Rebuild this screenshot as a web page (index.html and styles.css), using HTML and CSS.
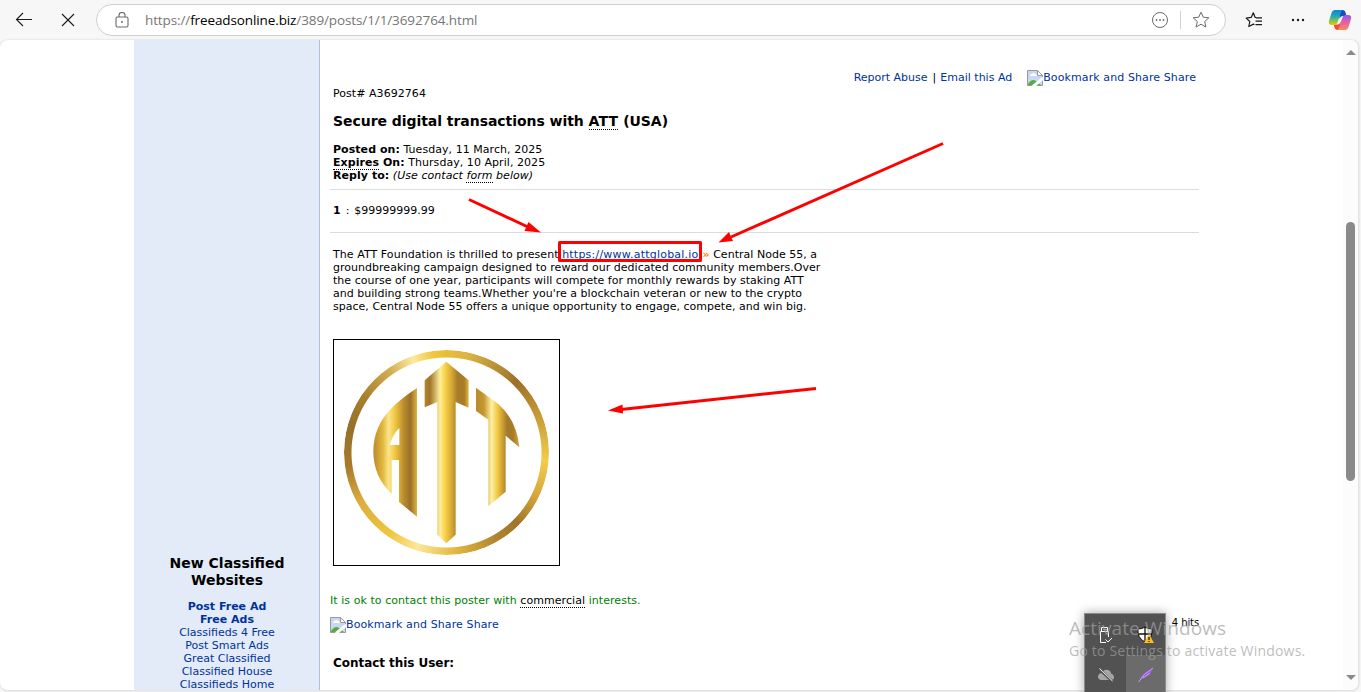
FILE: index.html
```
<!DOCTYPE html>
<html lang="en">
<head>
    <meta charset="UTF-8">
    <meta name="viewport" content="width=device-width, initial-scale=1.0">
    <title>Secure digital transactions with ATT (USA)</title>
    <link rel="stylesheet" href="styles.css">
</head>
<body>
    <!-- shared icons -->
    <svg class="defs" width="0" height="0">
        <symbol id="broken-image" viewBox="0 0 16 16">
            <path d="M.5 .5h10l5 5v10H.5z" fill="#c9d8f2"/>
            <path d="M3 6q0-2 2-2 1-2 3 0 2 0 2 2z" fill="#fff"/>
            <path d="M1 15v-1q4-6 8-3l5 4z" fill="#56ad39"/>
            <path d="M10.500 .5v5h5z" fill="#fff"/>
            <path d="M.5 .5h10l5 5v10H.5zM10.500 .5v5h5" fill="none" stroke="#9a9a9a"/>
            <path d="M6 16.500L16.500 8" stroke="#fff" stroke-width="3"/>
        </symbol>
        <symbol id="star" viewBox="0 0 18 18">
            <path d="M9 1.200l2.300 5 5.500.600-4.100 3.700 1.200 5.500L9 13.200 4.100 16l1.200-5.500L1.200 6.800l5.500-.600z" fill="none" stroke="#6b6b6b" stroke-linejoin="round"/>
        </symbol>
    </svg>

    <div class="toolbar">
        <svg class="back" width="18" height="16" viewBox="0 0 18 16"><path d="M17 7.500H1.500M8 1L1.500 7.500 8 14" fill="none" stroke="#1b1b1b" stroke-width="1.100"/></svg>
        <svg class="stop" width="14" height="14" viewBox="0 0 14 14"><path d="M1 1l12 12M13 1L1 13" stroke="#1b1b1b" stroke-width="1.100"/></svg>
        <div class="address">
            <svg class="lock" width="14" height="16" viewBox="0 0 14 16">
                <rect x="1" y="5" width="12" height="10" rx="1.500" fill="none" stroke="#6b6b6b" stroke-width="1.100"/>
                <path d="M4 5V3.500a3 3 0 0 1 6 0V5" fill="none" stroke="#6b6b6b" stroke-width="1.100"/>
                <circle cx="7" cy="10" r="1" fill="#6b6b6b"/>
            </svg>
            <span class="url">https://<b>freeadsonline.biz</b>/389/posts/1/1/3692764.html</span>
            <svg class="more" width="18" height="18" viewBox="0 0 18 18">
                <circle cx="9" cy="9" r="7.500" fill="none" stroke="#6b6b6b"/>
                <circle cx="5.500" cy="9" r=".9" fill="#6b6b6b"/><circle cx="9" cy="9" r=".9" fill="#6b6b6b"/><circle cx="12.500" cy="9" r=".9" fill="#6b6b6b"/>
            </svg>
            <span class="divider"></span>
            <svg width="18" height="18"><use href="#star"/></svg>
        </div>
        <svg class="favorites" width="18" height="18" viewBox="0 0 18 18">
            <path d="M11 6.500h-.8L8.300 1.800 6.200 6.400l-5 .700 3.600 3.400-1 5 4.600-2.400 1 .6M11 6.800h6M10.500 10.200h6.500M10.500 13.600h6.500" fill="none" stroke="#1b1b1b" stroke-width="1.200" stroke-linejoin="round"/>
        </svg>
        <svg class="dots" width="14" height="4" viewBox="0 0 14 4" fill="#1b1b1b"><circle cx="2" cy="2" r="1.200"/><circle cx="7" cy="2" r="1.200"/><circle cx="12" cy="2" r="1.200"/></svg>
        <svg class="copilot" width="24" height="22" viewBox="0 0 24 22">
            <defs>
                <linearGradient id="cpA" x1="0" y1="0" x2="0" y2="1"><stop offset="0" stop-color="#0c87e0"/><stop offset=".4" stop-color="#1ea7b8"/><stop offset=".7" stop-color="#7cc451"/><stop offset="1" stop-color="#f5c400"/></linearGradient>
                <linearGradient id="cpB" x1="0" y1="0" x2="0" y2="1"><stop offset="0" stop-color="#8c5ce8"/><stop offset=".5" stop-color="#e75fa8"/><stop offset="1" stop-color="#ff8a4c"/></linearGradient>
            </defs>
            <path d="M11 1h4q2 0 2.700 3l.8 3h-4q-2 0-3 3z" fill="#1650b8"/>
            <path d="M13 21H9q-2 0-2.700-3l-.6-2.500h4q2 0 3-3z" fill="#ee5037"/>
            <path d="M7 1h8q-1.500.5-2.300 3L9.700 13q-.7 3-2.700 3H4q-4 0-3-4L3.500 4q1-3 3.500-3z" fill="url(#cpA)"/>
            <path d="M17 21H9q1.500-.5 2.300-3l3-9q.7-3 2.700-3h3q4 0 3 4l-2.500 8q-1 3-3.500 3z" fill="url(#cpB)"/>
        </svg>
    </div>

    <div class="page">
        <div class="sidebar">
            <h3>New Classified Websites</h3>
            <a class="bold">Post Free Ad</a>
            <a class="bold">Free Ads</a>
            <a>Classifieds 4 Free</a>
            <a>Post Smart Ads</a>
            <a>Great Classified</a>
            <a>Classified House</a>
            <a>Classifieds Home</a>
        </div>

        <div class="main">
            <div class="links">
                <a>Report Abuse</a><span class="pipe">|</span><a>Email this Ad</a>
                <a class="share"><svg width="16" height="16"><use href="#broken-image"/></svg>Bookmark and Share Share</a>
            </div>
            <div class="post-id">Post# A3692764</div>
            <h1>Secure digital transactions with <u>ATT</u> (USA)</h1>
            <div class="meta">
                <div><b>Posted on:</b> Tuesday, 11 March, 2025</div>
                <div><b><u>Expires</u> On:</b> Thursday, 10 April, 2025</div>
                <div><b>Reply to:</b> <i>(Use contact <u>form</u> below)</i></div>
            </div>
            <div class="price"><b>1</b> : $99999999.99</div>
            <p class="description"><span class="intro">The ATT Foundation is thrilled to present</span> <a class="site">https://www.attglobal.io</a><span class="raquo">»</span> Central Node 55, a<br>
                groundbreaking campaign designed to reward our dedicated community members.Over<br>
                the course of one year, participants will compete for monthly rewards by staking ATT<br>
                and building strong teams.Whether you're a blockchain veteran or new to the crypto<br>
                space, Central Node 55 offers a unique opportunity to engage, compete, and win big.</p>

            <div class="photo">
                <svg width="225" height="225" viewBox="27 30 675 675">
                    <defs>
                        <linearGradient id="goldA" gradientUnits="userSpaceOnUse" x1="145" y1="0" x2="276" y2="0">
                            <stop offset="0" stop-color="#b98b2b"/><stop offset=".22" stop-color="#e3b93f"/><stop offset=".35" stop-color="#fbe58a"/><stop offset=".5" stop-color="#f0c63e"/><stop offset=".7" stop-color="#b98b2f"/><stop offset=".85" stop-color="#99702a"/><stop offset="1" stop-color="#e0b33b"/>
                        </linearGradient>
                        <linearGradient id="goldB" gradientUnits="userSpaceOnUse" x1="299" y1="0" x2="431" y2="0">
                            <stop offset="0" stop-color="#b3852b"/><stop offset=".12" stop-color="#a0752a"/><stop offset=".35" stop-color="#ffef9c"/><stop offset=".45" stop-color="#fbd54d"/><stop offset=".6" stop-color="#d9ad38"/><stop offset=".75" stop-color="#a87b28"/><stop offset=".9" stop-color="#a97c2a"/><stop offset="1" stop-color="#e3b840"/>
                        </linearGradient>
                        <linearGradient id="goldC" gradientUnits="userSpaceOnUse" x1="453" y1="0" x2="583" y2="0">
                            <stop offset="0" stop-color="#b98a2c"/><stop offset=".18" stop-color="#c4972f"/><stop offset=".36" stop-color="#fff0a2"/><stop offset=".5" stop-color="#f1c740"/><stop offset=".72" stop-color="#a57929"/><stop offset=".85" stop-color="#a77b2a"/><stop offset="1" stop-color="#d5a638"/>
                        </linearGradient>
                    </defs>
                    <path fill="url(#goldA)" fill-rule="evenodd" d="M276 174V560L222 516V390H200V492Q145 440 145 364Q145 290 200 234Q230 204 276 174ZM223 294Q205 310 194 345H223Z"/>
                    <path fill="url(#goldB)" d="M364 95L431 151V233L392 216V614L364 640L337 614V216L299 232V151Z"/>
                    <path fill="url(#goldC)" d="M453 173L520 222Q575 270 583 352L542 317V485L490 529V269L453 243Z"/>
                </svg>
            </div>

            <div class="contact-ok">It is ok to contact this poster with <u>commercial</u> interests.</div>
            <div class="bottom-row">
                <a class="share"><svg width="16" height="16"><use href="#broken-image"/></svg>Bookmark and Share Share</a>
                <span class="hits">4 hits</span>
            </div>
            <h2>Contact this User:</h2>
        </div>

        <div class="scrollbar">
            <span class="arrow-up"></span>
            <span class="thumb"></span>
            <span class="arrow-down"></span>
        </div>
    </div>

    <!-- markup drawn over the page -->
    <svg class="annotations" width="1361" height="692" viewBox="0 0 1361 692">
        <g stroke="#f00" stroke-width="3" fill="none">
            <path d="M469 199.500L529 227.500"/>
            <path d="M943 143.500L731 237"/>
            <path d="M816 388.500L621 409.500"/>
            <rect x="559.500" y="242.500" width="141" height="18" stroke-linejoin="round"/>
        </g>
        <g fill="#f00">
            <path d="M541 232.500l-16.500-1.500 4-9z"/>
            <path d="M718.500 242.500l10.500-10.500 4 9z"/>
            <path d="M608 410.500l14.500-6 .5 9z"/>
        </g>
    </svg>

    <div class="tray">
        <div class="tile"><svg width="14" height="18" viewBox="0 0 14 18"><path d="M2.500 5.500V1.500h6v4M7 16.500H1.500v-11h8V11M6.500 13.500l2.500 2.500L13 12M4.500 3.500h1M6.500 3.500h1" fill="none" stroke="#fff"/></svg></div>
        <div class="tile"><svg width="18" height="18" viewBox="0 0 18 18">
            <path d="M8 1q3 2 7 2 1 9-7 13Q0 12 1 3q4 0 7-2z" fill="#fff" stroke="#111"/>
            <path d="M8 1v15M1 8h14" stroke="#111" stroke-width="1.300"/>
            <path d="M12 8l5 9H7z" fill="#ffbf18"/><path d="M12 11v3M12 15v1" stroke="#111" stroke-width="1.200"/>
        </svg></div>
        <div class="tile"><svg width="18" height="16" viewBox="0 0 18 16"><path d="M4 13q-3.500-1-3-4Q2 6 5 6q2-4 6-3 3 1 3 3.500 3 1 3 4 0 2.500-3 2.500z" fill="#a6a6a6"/><path d="M2 2l13 12" stroke="#525252" stroke-width="2.500"/><path d="M2.500 1.500l13 12.500" stroke="#fff"/></svg></div>
        <div class="tile active"><svg width="18" height="18" viewBox="0 0 18 18"><path d="M3 14Q3 8 16 2q0 7-13 12z" fill="#9a5fd0"/><path d="M1.500 16Q6 8 16 2M6 12l7-5" fill="none" stroke="#d3b0f5" stroke-width=".8"/></svg></div>
    </div>

    <div class="watermark">
        <div class="big">Activate Windows</div>
        <div class="small">Go to Settings to activate Windows.</div>
    </div>
</body>
</html>
```
FILE: styles.css
```
* {
    margin: 0;
    padding: 0;
    box-sizing: border-box;
}

body {
    width: 1361px;
    height: 692px;
    overflow: hidden;
    background: #f7f7f7;
    font-family: Verdana, "DejaVu Sans", sans-serif;
    font-size: 11px;
    line-height: 13px;
    color: #000;
}

.defs {
    position: absolute;
}

svg {
    display: block;
    flex: none;
}

a {
    color: #039;
}

u {
    text-decoration: none;
    border-bottom: 1px dotted #000;
}

/* browser bar */
.toolbar {
    display: flex;
    align-items: center;
    height: 40px;
    padding-left: 15px;
}

.stop {
    margin-left: 28px;
}

.address {
    display: flex;
    align-items: center;
    width: 1130px;
    height: 32px;
    margin-left: 21px;
    padding: 0 15px 0 18px;
    background: #fff;
    border: 1px solid #cfcfcf;
    border-radius: 16px;
}

.url {
    margin-left: 16px;
    flex: 1;
    font: 13.5px/20px "Open Sans", sans-serif;
    letter-spacing: -0.11px;
    color: #767676;
}

.url b {
    font-weight: normal;
    color: #000;
}

.divider {
    width: 1px;
    height: 18px;
    margin: 0 11px 0 11px;
    background: #d2d2d2;
}

.favorites {
    margin-left: 19px;
}

.dots {
    margin-left: 28px;
}

.copilot {
    margin-left: 23px;
}

/* page */
.page {
    display: flex;
    width: 1359px;
    height: 651px;
    padding-left: 134px;
    overflow: hidden;
    background: #fff;
    border: 1px solid #e4e4e4;
    border-width: 0 1px 1px 0;
    border-radius: 8px;
    box-shadow: 0 0 2px #ccc;
}

.sidebar {
    width: 186px;
    padding-top: 515px;
    padding-left: 1px;
    background: #e3eaf8;
    border-right: 1px solid #adc0dc;
    text-align: center;
}

.sidebar h3 {
    padding: 0 30px;
    margin-bottom: 11px;
    font-size: 14px;
    line-height: 17px;
}

.sidebar a {
    display: block;
}

.sidebar .bold {
    font-weight: bold;
}

.main {
    flex: 1;
    padding: 31px 144px 0 10px;
}

.links {
    display: flex;
    justify-content: flex-end;
    height: 16px;
    padding-right: 3px;
}

.pipe {
    margin: 0 4px 0 5px;
}

.share {
    display: flex;
    letter-spacing: 0.1px;
}

.share svg {
    margin-top: -1px;
}

.links .share {
    margin-left: 15px;
}

.post-id {
    padding-left: 3px;
    letter-spacing: 0.05px;
}

.main h1 {
    margin: 13px 0 13px 3px;
    font-size: 14px;
    line-height: 17px;
    letter-spacing: -0.05px;
}

.main h1 u {
    letter-spacing: 0.2px;
}

.meta {
    height: 47px;
    padding-left: 3px;
    border-bottom: 1px solid #dcdcdc;
    letter-spacing: 0.05px;
}

.price {
    height: 43px;
    padding: 14px 3px 0;
    border-bottom: 1px solid #dcdcdc;
    word-spacing: 1.5px;
}

.description {
    padding: 15px 3px 0;
    letter-spacing: 0.02px;
    white-space: nowrap;
}

.intro {
    letter-spacing: 0.06px;
}

.site {
    letter-spacing: 0.22px;
}

.raquo {
    margin-left: 4px;
    font-weight: bold;
    color: #f80;
}

.photo {
    position: relative;
    width: 227px;
    height: 227px;
    margin: 26px 0 28px 3px;
    border: 1px solid #000;
}

/* gold ring */
.photo::before {
    content: "";
    position: absolute;
    left: 10px;
    top: 10px;
    width: 205px;
    height: 205px;
    border-radius: 50%;
    background: conic-gradient(#e8bd35 0deg, #dcb545 12deg, #9c7028 45deg, #b98c30 60deg, #f2cc4c 95deg, #d6a93a 115deg, #9f7429 135deg, #b08530 150deg, #e2b840 175deg, #fde79a 197deg, #efc63f 215deg, #dcae40 240deg, #a87a2c 262deg, #94702a 285deg, #a8812e 305deg, #d2ad50 325deg, #fde9a0 340deg, #f0c840 352deg, #e8bd35 360deg);
    -webkit-mask: radial-gradient(circle, transparent 94.5px, #000 95.500px);
    mask: radial-gradient(circle, transparent 94.5px, #000 95.500px);
}

.contact-ok {
    color: #008000;
    letter-spacing: 0.06px;
}

.contact-ok u {
    color: #000;
}

.bottom-row {
    display: flex;
    justify-content: space-between;
    height: 28px;
    margin-top: 11px;
}

.hits {
    margin-top: -2px;
    font-size: 10px;
    letter-spacing: -0.1px;
}

.main h2 {
    margin: 10px 0 0 3px;
    font-size: 12px;
    line-height: 15px;
    letter-spacing: -0.05px;
}

.scrollbar {
    display: flex;
    flex-direction: column;
    align-items: center;
    width: 15px;
    background: #fcfcfc;
}

.arrow-up,
.arrow-down {
    border: 5px solid transparent;
}

.arrow-up {
    margin-top: 10px;
    border-bottom-color: #8a8a8a;
    border-top-width: 0;
}

.arrow-down {
    margin-top: 194px;
    border-top-color: #8a8a8a;
    border-bottom-width: 0;
}

.thumb {
    width: 9px;
    height: 259px;
    margin-top: 167px;
    background: #8a8a8a;
    border-radius: 5px;
}

/* overlays */
.annotations {
    position: absolute;
    left: 0;
    top: 0;
}

.tray {
    position: absolute;
    left: 1084px;
    top: 613px;
    display: grid;
    grid-template-columns: 41px 39px;
    grid-template-rows: 41px 39px;
    border: 1px solid #8b8b8b;
    background: #525252;
    box-shadow: 0 0 10px rgba(0, 0, 0, 0.35);
}

.tile {
    display: flex;
    align-items: center;
    justify-content: center;
}

.tile.active {
    background: #6b6b6b;
}

.watermark {
    position: absolute;
    left: 1069px;
    top: 616px;
    font-family: "Open Sans", sans-serif;
    color: rgba(160, 160, 160, 0.7);
    white-space: nowrap;
}

.watermark .big {
    font-size: 19px;
    line-height: 25px;
    letter-spacing: 0.07px;
}

.watermark .small {
    font-size: 14px;
    line-height: 20px;
    letter-spacing: 0.2px;
}
```
